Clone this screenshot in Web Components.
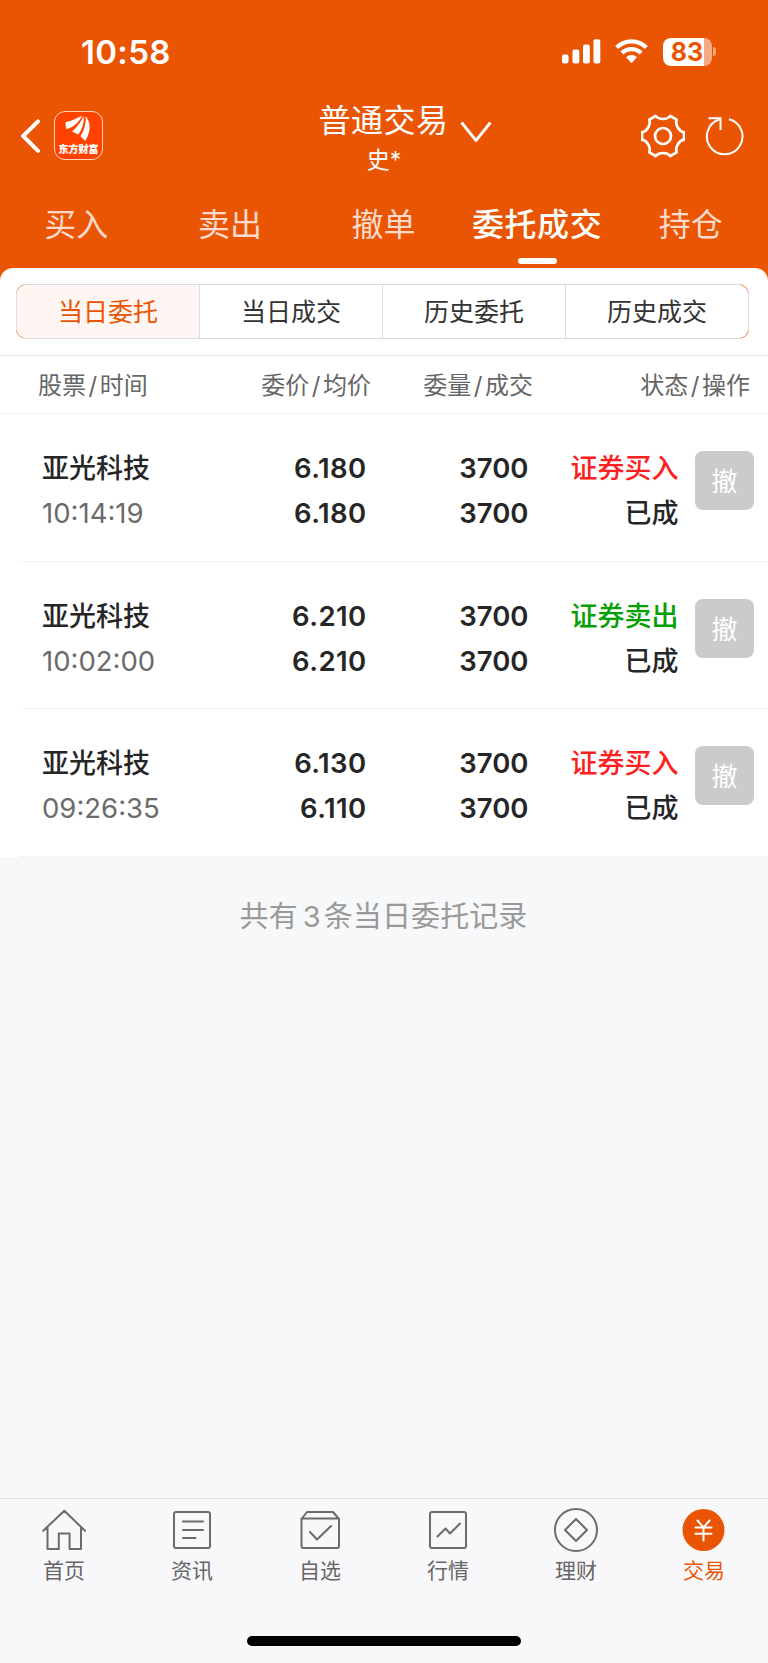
<!DOCTYPE html>
<html lang="zh-CN">
<head>
<meta charset="utf-8">
<meta name="viewport" content="width=device-width, initial-scale=1">
<title>普通交易</title>
<style>
  html, body { margin: 0; height: 100%; }
  body {
    background: #f7f8fa;
    font-family: Inter, "Noto Sans CJK SC", sans-serif;
    color: #262626;
  }
</style>
</head>
<body>
<trade-app></trade-app>

<script>
class BaseElement extends HTMLElement {
  constructor() {
    super();
    this.attachShadow({ mode: "open" });
  }

  connectedCallback() {
    this.shadowRoot.innerHTML = this.template();
  }
}

class StatusBar extends BaseElement {
  template() {
    return `
      <style>
        :host { display: flex; justify-content: space-between; align-items: center; height: 103px; padding: 0 52.5px 0 81px; color: #fff; }
        .time { font-size: 33px; font-weight: 600; line-height: 40px; letter-spacing: .3px; }
        .icons { display: flex; align-items: center; }
        svg { display: block; }
        .wifi { margin: 0 15px 0 14px; }
        .battery { display: flex; align-items: center; }
        .level {
          width: 49px; height: 28px; border-radius: 8px; color: #ea5504;
          background: linear-gradient(90deg, #fff 41px, #f6aa82 41px);
          font-size: 25px; font-weight: 700; line-height: 28px; text-align: center;
        }
        .nub { width: 3px; height: 9px; margin-left: 1px; border-radius: 0 4px 4px 0; background: #f3a47a; }
      </style>
      <span class="time"><slot></slot></span>
      <div class="icons">
        <svg width="39" height="25" viewBox="0 0 39 25" fill="#fff">
          <rect x="0" y="15.5" width="6.5" height="9" rx="2"/><rect x="10.5" y="10.5" width="6.8" height="14" rx="2"/>
          <rect x="21" y="5.5" width="6.8" height="19" rx="2"/><rect x="31.5" y=".3" width="6.8" height="24.2" rx="2"/>
        </svg>
        <svg class="wifi" width="33" height="25" viewBox="0 0 33 25">
          <g fill="none" stroke="#fff" stroke-width="4.3">
            <path d="M1.6 8.6a21 21 0 0 1 29.8 0"/><path d="M6.9 14a13.6 13.6 0 0 1 19.2 0"/>
          </g>
          <path d="M11.4 18.2q5.1-4 10.2 0l-5.1 5.7z" fill="#fff" stroke="#fff" stroke-width=".6" stroke-linejoin="round"/>
        </svg>
        <div class="battery"><div class="level">${this.getAttribute("battery")}</div><div class="nub"></div></div>
      </div>`;
  }
}

class TitleBar extends BaseElement {
  template() {
    return `
      <style>
        :host { display: grid; grid-template-columns: 1fr auto 1fr; height: 77px; padding-right: 1px; color: #fff; }
        svg { display: block; }
        .left { display: flex; align-items: flex-start; padding: 8px 0 0 20px; }
        .back { margin: 8px 14px 0 0; }
        .logo {
          box-sizing: border-box; width: 49px; height: 49px; border: 1px solid #ffd5c2; border-radius: 11px;
          background: #ff4200; text-align: center;
        }
        .logo svg { margin: 3px 0 0 10px; }
        .logo b { display: block; margin: 1px -1px 0; font: 900 10px/12px "Noto Sans CJK SC", sans-serif; white-space: nowrap; }
        .heading { text-align: center; }
        .name { font-size: 32px; line-height: 35px; letter-spacing: .5px; }
        .user { font-size: 23px; line-height: 36px; margin-top: 4px; padding-left: 1px; }
        .right { display: flex; align-items: flex-start; }
        .down { margin: 18px auto 0 11px; }
        .gear { margin: 11px 20px 0 0; }
        .reload { margin: 12px 22px 0 0; }
      </style>
      <div class="left">
        <svg class="back" width="20" height="34" viewBox="0 0 20 34" fill="none" stroke="#fff" stroke-width="4" stroke-linecap="round" stroke-linejoin="round"><path d="M18 2.3 3.2 17 18 31.8"/></svg>
        <div class="logo">
          <svg width="26" height="27" viewBox="0 0 26 27" fill="#fff">
            <path d="M.5 7C6 6.500 11 3.500 17 .8 14.500 6 10.500 11.500 1.500 14.200Q.4 10.500 .5 7z"/>
            <path d="M18.500 1C19.500 7 17.500 14 13.300 19.500L7 16.500C12 12.500 16 7 18.500 1z"/>
            <path d="M20.500 1C25.500 6 26.500 16 20.300 26L15.500 21.300C19.500 15 21.500 8 20.500 1z"/>
          </svg>
          <b>东方财富</b>
        </div>
      </div>
      <div class="heading">
        <div class="name"><slot></slot></div>
        <div class="user">${this.getAttribute("user")}</div>
      </div>
      <div class="right">
        <svg class="down" width="32" height="22" viewBox="0 0 32 22" fill="none" stroke="#fff" stroke-width="2.8" stroke-linejoin="round"><path d="M1.500 1.500 16 19.500 30.500 1.500"/></svg>
        <svg class="gear" width="44" height="44" viewBox="-22 -22 44 44" fill="none" stroke="#fff" stroke-width="2.700" stroke-linejoin="round">
          <path d="M7.300-20C4-16-4-16-7.300-20L-13.700-16.300C-11.900-11.500-15.900-4.500-21-3.700V3.700C-15.900 4.500-11.900 11.500-13.700 16.300L-7.300 20C-4 16 4 16 7.300 20L13.700 16.300C11.900 11.500 15.900 4.500 21 3.700V-3.700C15.900-4.500 11.900-11.500 13.700-16.300Z"/>
          <circle r="8"/>
        </svg>
        <svg class="reload" width="40" height="42" viewBox="0 0 40 42" fill="none" stroke="#fff" stroke-width="2">
          <path d="M24 4.200A17.800 17.800 0 1 1 15 4.300"/><path d="M3.500 3.200H15.500V15"/>
        </svg>
      </div>`;
  }
}

class TradeTab extends BaseElement {
  template() {
    return `
      <style>
        :host { flex: 1; display: flex; flex-direction: column; align-items: center; font-size: 32px; line-height: 50px; white-space: nowrap; color: #fbdacb; }
        :host([active]) { color: #fff; font-weight: 500; letter-spacing: .6px; }
        i { display: none; width: 39px; height: 6px; margin: 8px 0 0 1px; border-radius: 3px; background: #fff; }
        :host([active]) i { display: block; }
      </style>
      <slot></slot><i></i>`;
  }
}

class SegmentedControl extends BaseElement {
  template() {
    const items = this.getAttribute("items").split(",");
    return `
      <style>
        /* grey outline, orange only around the four corners */
        :host {
          display: flex; box-sizing: border-box; height: 55px; margin: 0 19px 0 16px; overflow: hidden;
          border: 1px solid transparent; border-radius: 10px;
          background: linear-gradient(#fff, #fff) padding-box,
            linear-gradient(#d9dde3, #d9dde3) 0 50% / 100% calc(100% - 18px) no-repeat border-box,
            linear-gradient(90deg, #ea9674 9px, #d9dde3 9px, #d9dde3 calc(100% - 9px), #ea9674 calc(100% - 9px)) border-box;
        }
        span { flex: 1; box-sizing: border-box; border-right: 1px solid #d9dde3; font-size: 25px; line-height: 54px; text-align: center; color: #333; }
        span:first-of-type { background: #fff5f2; color: #ea5504; }
        span:last-of-type { border: 0; }
      </style>
      ${items.map((item) => `<span>${item}</span>`).join("")}`;
  }
}

class OrderHeader extends BaseElement {
  template() {
    return `
      <style>
        :host { display: grid; grid-template-columns: 130px 203px 162px 217px; height: 57px; padding-left: 38px; border-top: 1px solid #e3e4e6; border-bottom: 1px solid #eeeff0; font-size: 24px; line-height: 59px; color: #666; text-align: right; white-space: nowrap; }
        span:first-of-type { text-align: left; }
        u { padding: 0 2.5px; text-decoration: none; }
      </style>
      ${[["股票", "时间"], ["委价", "均价"], ["委量", "成交"], ["状态", "操作"]]
        .map(([a, b]) => `<span>${a}<u>/</u>${b}</span>`).join("")}`;
  }
}

class OrderRow extends BaseElement {
  template() {
    const get = (name) => this.getAttribute(name);
    return `
      <style>
        :host { display: block; padding-left: 20px; background: #fff; }
        .row { display: grid; grid-template-columns: 160px 164.5px 162px 150px 76px; height: 146.6px; padding-left: 22px; border-bottom: 1px solid #f2f3f5; }
        .col { padding-top: 32px; font-size: 27px; font-weight: 500; line-height: 45px; text-align: right; white-space: nowrap; }
        .col div { height: 45px; }
        .first { text-align: left; }
        .num { font-size: 27.5px; font-weight: 600; }
        .price { letter-spacing: .4px; }
        .time { font-size: 27.5px; font-weight: 400; color: #6b6b6b; }
        .buy { color: #fd2020; }
        .sell { color: #04a004; }
        .cancel { width: 59px; height: 59px; margin: 37px 0 0 16.5px; border-radius: 8px; background: #cbcbcb; color: #fff; font-size: 26px; line-height: 61px; text-align: center; }
      </style>
      <div class="row">
        <div class="col first"><div>${get("name")}</div><div class="time">${get("time")}</div></div>
        <div class="col num price"><div>${get("price")}</div><div>${get("average")}</div></div>
        <div class="col num"><div>${get("amount")}</div><div>${get("amount")}</div></div>
        <div class="col"><div class="${get("side")}">${get("side") === "buy" ? "证券买入" : "证券卖出"}</div><div>已成</div></div>
        <div class="cancel">撤</div>
      </div>`;
  }
}

const NAV_ICONS = {
  home: `<path d="M2.200 22.800 23.300 2.700 44 22.800M6.500 19v22h11.300V25.600h10.800V41H40V19"/>`,
  news: `<rect x="5" y="4" width="36" height="36" rx="2"/><path d="M14 13.500h20M14 22h20M14 30h12.500"/>`,
  watch: `<path d="M4.500 11 10 4h26l6 7v27q0 2-2 2H6.500q-2 0-2-2zM4.500 10.500H42M13 24l7 7.500L34 18"/>`,
  market: `<rect x="5" y="4" width="36" height="36" rx="2"/><path d="m12.500 28.500 8-8 4.500 5L35 15.500"/>`,
  wealth: `<circle cx="23" cy="22" r="21"/><path d="m23 11 11 11-11 11-11-11z"/>`,
  trade: `<circle cx="22.500" cy="22" r="21" fill="#ea5504" stroke="none"/><path d="m16.500 12.500 6 7 6-7M14.500 19.500h16M14.500 25.700h16M22.500 19.500v13" stroke="#fff"/>`
};

class NavItem extends BaseElement {
  template() {
    return `
      <style>
        :host { flex: 1; display: flex; flex-direction: column; align-items: center; padding-top: 9px; font-size: 21px; line-height: 30px; color: #666; }
        :host([active]) { color: #ea5504; }
        svg { margin-bottom: 4px; }
      </style>
      <svg width="46" height="44" viewBox="0 0 46 44" fill="none" stroke="#6b6b6b" stroke-width="2" stroke-linejoin="round" stroke-linecap="round">${NAV_ICONS[this.getAttribute("icon")]}</svg>
      <slot></slot>`;
  }
}

class TradeApp extends BaseElement {
  template() {
    return `
      <style>
        :host { display: flex; flex-direction: column; width: 768px; height: 1663px; overflow: hidden; }
        header { height: 268px; background: #ea5504; }
        .tabs { display: flex; margin: 20px .5px 0 -.5px; }
        .corners { background: #ea5504; }
        .sheet { padding: 16px 0; background: #fff; border-radius: 13px 13px 0 0; }
        order-header { background: #fff; }
        .summary { flex: 1; padding: 39px 1px 0 0; font-size: 29px; line-height: 42px; text-align: center; color: #999; letter-spacing: .1px; }
        .summary span { margin: 0 3px 0 5px; }
        nav { display: flex; height: 137px; border-top: 1px solid #e0e1e3; background: #f8f8fa; }
        .home { height: 27px; background: #f8f8fa; }
        .home i { display: block; width: 274px; height: 10px; margin: 0 auto; border-radius: 5px; background: #000; }
      </style>
      <header>
        <status-bar battery="83">10:58</status-bar>
        <title-bar user="史*">普通交易</title-bar>
        <div class="tabs">
          <trade-tab>买入</trade-tab>
          <trade-tab>卖出</trade-tab>
          <trade-tab>撤单</trade-tab>
          <trade-tab active>委托成交</trade-tab>
          <trade-tab>持仓</trade-tab>
        </div>
      </header>
      <div class="corners"><div class="sheet"><segmented-control items="当日委托,当日成交,历史委托,历史成交"></segmented-control></div></div>
      <order-header></order-header>
      <order-row name="亚光科技" time="10:14:19" price="6.180" average="6.180" amount="3700" side="buy"></order-row>
      <order-row name="亚光科技" time="10:02:00" price="6.210" average="6.210" amount="3700" side="sell"></order-row>
      <order-row name="亚光科技" time="09:26:35" price="6.130" average="6.110" amount="3700" side="buy"></order-row>
      <div class="summary">共有<span>3</span>条当日委托记录</div>
      <nav>
        <nav-item icon="home">首页</nav-item>
        <nav-item icon="news">资讯</nav-item>
        <nav-item icon="watch">自选</nav-item>
        <nav-item icon="market">行情</nav-item>
        <nav-item icon="wealth">理财</nav-item>
        <nav-item icon="trade" active>交易</nav-item>
      </nav>
      <div class="home"><i></i></div>`;
  }
}

customElements.define("status-bar", StatusBar);
customElements.define("title-bar", TitleBar);
customElements.define("trade-tab", TradeTab);
customElements.define("segmented-control", SegmentedControl);
customElements.define("order-header", OrderHeader);
customElements.define("order-row", OrderRow);
customElements.define("nav-item", NavItem);
customElements.define("trade-app", TradeApp);
</script>
</body>
</html>
